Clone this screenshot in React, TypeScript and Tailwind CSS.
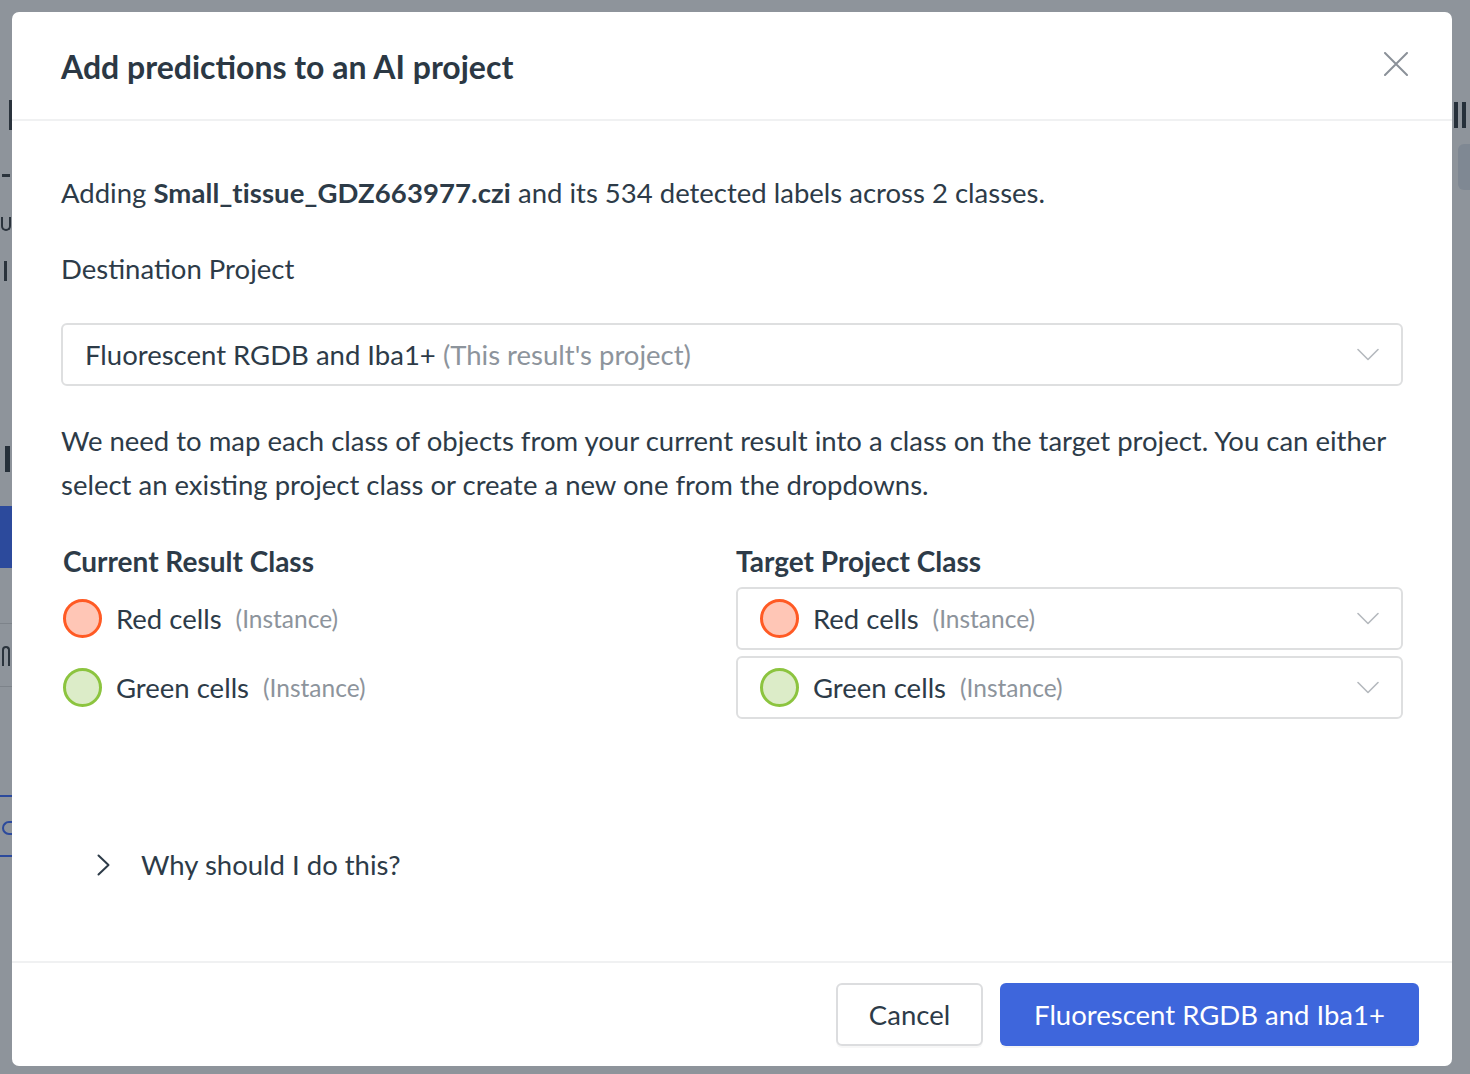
type CellClass = {
  name: string
  kind: string
  fill: string
  ring: string
}

const classes: CellClass[] = [
  { name: "Red cells", kind: "(Instance)", fill: "bg-[#ffc6b6]", ring: "border-[#ff5a24]" },
  { name: "Green cells", kind: "(Instance)", fill: "bg-[#dcecc8]", ring: "border-[#8cc43f]" },
]

const Dot = ({ c }: { c: CellClass }) => (
  <span className={`block w-[39px] h-[39px] rounded-full border-[3.5px] shrink-0 ${c.fill} ${c.ring}`} />
)

const Caret = () => (
  <svg width="22" height="13" viewBox="0 0 22 13" fill="none" className="shrink-0">
    <path d="M1 1.5 L11 11.5 L21 1.5" stroke="#b5b9be" strokeWidth="1.6" strokeLinecap="round" strokeLinejoin="round" />
  </svg>
)

const CloseIcon = () => (
  <svg width="24" height="24" viewBox="0 0 24 24" fill="none">
    <path d="M1 1 L23 23 M23 1 L1 23" stroke="#8b9199" strokeWidth="2" strokeLinecap="round" />
  </svg>
)

const Arrow = () => (
  <svg width="13" height="22" viewBox="0 0 13 22" fill="none" className="shrink-0">
    <path d="M1.5 1.5 L11.5 11 L1.5 20.5" stroke="#2d3b48" strokeWidth="2" strokeLinecap="round" strokeLinejoin="round" />
  </svg>
)

// what peeks out around the dialog, dimmed by the backdrop
const Backdrop = () => (
  <div className="absolute inset-0 bg-[#8e949b] overflow-hidden">
    <div className="flex justify-between h-full">
      <div className="w-[12px] flex flex-col overflow-hidden">
        <div className="mt-[100px] ml-[9px] w-[3px] h-[30px] bg-[#2a333c]" />
        <div className="mt-[44px] ml-[2px] w-[8px] h-[3px] bg-[#2a333c]" />
        <div className="mt-[40px] ml-[1px] w-[10px] h-[14px] rounded-b-full border-2 border-t-0 border-[#2a333c]" />
        <div className="mt-[30px] ml-[4px] w-[3px] h-[20px] bg-[#2a333c]" />
        <div className="mt-[165px] ml-[5px] w-[5px] h-[26px] bg-[#26303a]" />
        <div className="mt-[34px] h-[62px] bg-[#2c4a9c]" />
        <div className="mt-[55px] h-[1px] bg-[#7d838a]" />
        <div className="mt-[22px] ml-[2px] w-[8px] h-[20px] rounded-t-md border-2 border-b-0 border-[#2a333c]" />
        <div className="mt-[20px] h-[1px] bg-[#7d838a]" />
        <div className="mt-[108px] h-[2px] bg-[#2c4a9c]" />
        <div className="mt-[24px] ml-[2px] w-[10px] h-[14px] rounded-l-full border-2 border-r-0 border-[#2c4a9c]" />
        <div className="mt-[20px] h-[2px] bg-[#2c4a9c]" />
      </div>
      <div className="w-[18px] flex flex-col overflow-hidden">
        <div className="mt-[102px] ml-[2px] flex gap-[4px]">
          <span className="w-[4px] h-[26px] bg-[#26303a]" />
          <span className="w-[4px] h-[26px] bg-[#26303a]" />
        </div>
        <div className="mt-[16px] ml-[6px] h-[46px] rounded-l-md bg-[#7f8893]" />
      </div>
    </div>
  </div>
)

export default function App() {
  return (
    <div
      className="relative w-[1470px] h-[1074px] overflow-hidden text-[#2d3b48]"
      style={{ fontFamily: "Lato, 'Open Sans', sans-serif" }}
    >
      <Backdrop />

      {/* Dialog */}
      <div className="absolute left-[12px] top-[12px] w-[1440px] h-[1054px] bg-white rounded-[7px] flex flex-col">
        <div className="h-[109px] shrink-0 flex items-center justify-between pl-[49px] pr-[44px] pt-[2px] border-b-2 border-[#f0f1f2]">
          <h2 className="text-[32px] font-bold text-[#2b3844]">Add predictions to an AI project</h2>
          <span className="mb-[6px]">
            <CloseIcon />
          </span>
        </div>

        <div className="flex-1 px-[49px] pt-[50px] text-[27.5px] leading-[44px]">
          <p>
            Adding <span className="font-bold tracking-[0.1px]">Small_tissue_GDZ663977.czi</span> and its 534 detected
            labels across 2 classes.
          </p>

          <p className="mt-[32px]">Destination Project</p>

          <div className="mt-[32px] h-[63px] border-2 border-[#dedfe0] rounded-[6px] flex items-center justify-between pl-[22px] pr-[22px]">
            <span>
              Fluorescent RGDB and Iba1+ <span className="text-[#8d949c]">(This result's project)</span>
            </span>
            <Caret />
          </div>

          <p className="mt-[33px]">
            We need to map each class of objects from your current result into a class on the target project. You can
            either select an existing project class or create a new one from the dropdowns.
          </p>

          <div className="mt-[34px] grid grid-cols-2 gap-x-[8px]">
            <div className="pl-[2px]">
              <h3 className="font-bold text-[28px] leading-[40px]">Current Result Class</h3>
              <div className="mt-[6px] flex flex-col gap-[6px]">
                {classes.map((c) => (
                  <div key={c.name} className="h-[63px] flex items-center gap-[14px]">
                    <Dot c={c} />
                    <span>{c.name}</span>
                    <span className="text-[24.5px] text-[#8d949c]">{c.kind}</span>
                  </div>
                ))}
              </div>
            </div>

            <div>
              <h3 className="font-bold text-[28px] leading-[40px]">Target Project Class</h3>
              <div className="mt-[6px] flex flex-col gap-[6px]">
                {classes.map((c) => (
                  <div
                    key={c.name}
                    className="h-[63px] border-2 border-[#dedfe0] rounded-[6px] flex items-center justify-between pl-[22px] pr-[22px]"
                  >
                    <div className="flex items-center gap-[14px]">
                      <Dot c={c} />
                      <span>{c.name}</span>
                      <span className="text-[24.5px] text-[#8d949c]">{c.kind}</span>
                    </div>
                    <Caret />
                  </div>
                ))}
              </div>
            </div>
          </div>

          <div className="mt-[124px] flex items-center pl-[36px] gap-[31px]">
            <Arrow />
            <span>Why should I do this?</span>
          </div>
        </div>

        <div className="h-[105px] shrink-0 border-t-2 border-[#f0f1f2] flex items-start justify-end gap-[17px] pt-[20px] pr-[33px]">
          <button className="h-[63px] w-[147px] border-2 border-[#dcdddf] rounded-[6px] text-[27.5px] text-[#2d3b48] bg-white shadow-[0_2px_0_rgba(0,0,0,0.03)]">
            Cancel
          </button>
          <button className="h-[63px] w-[419px] rounded-[6px] text-[27.5px] text-white bg-[#3e66dc] shadow-[0_2px_0_rgba(0,0,0,0.04)]">
            Fluorescent RGDB and Iba1+
          </button>
        </div>
      </div>
    </div>
  )
}
